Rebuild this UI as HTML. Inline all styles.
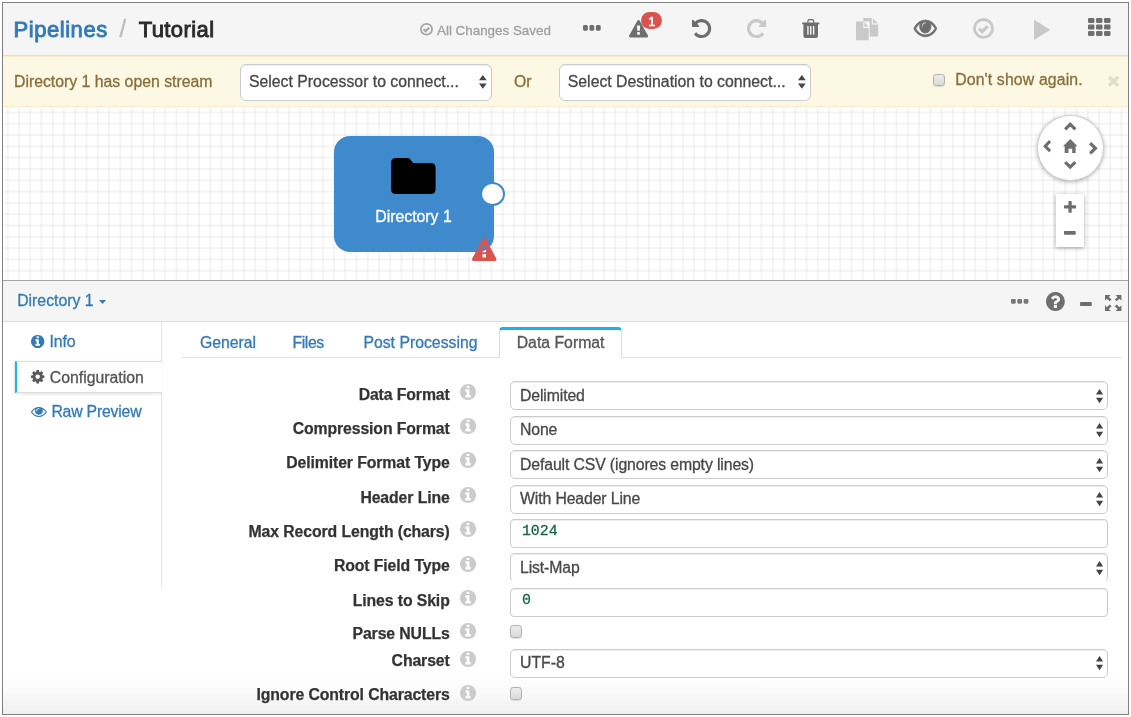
<!DOCTYPE html>
<html lang="en">
<head>
<meta charset="utf-8">
<title>Pipelines / Tutorial</title>
<style>
*{box-sizing:border-box;margin:0;padding:0}
html,body{width:1131px;height:717px;overflow:hidden;background:#fff}
body{font-family:"Liberation Sans",sans-serif;font-size:15.8px;color:#333;position:relative}
.abs{position:absolute}
svg{overflow:visible}
.t{position:absolute;white-space:nowrap;line-height:20px;height:20px;-webkit-text-stroke:.3px}
#frame{position:absolute;left:2px;top:2px;width:1127px;height:713px;border:1px solid #808080;overflow:hidden;background:#fff}
#in{position:absolute;left:-3px;top:-3px;width:1131px;height:717px;will-change:transform}
#hdr{left:3px;top:3px;width:1125px;height:53px;background:#f5f5f5;border-bottom:1px solid #ddd}
#warn{left:3px;top:56px;width:1125px;height:51px;background:#fcf8e3;border-bottom:1px solid #faebcc;border-top:1px solid #faebcc}
#canvas{left:3px;top:107px;width:1125px;height:174px;background-color:#fff;
 background-image:linear-gradient(rgba(0,0,0,.042) 1.6px,transparent 1.6px),linear-gradient(90deg,rgba(0,0,0,.042) 1.6px,transparent 1.6px);
 background-size:11.25px 11.315px;background-position:3.8px 4.45px}
#phdr{left:3px;top:280px;width:1125px;height:42px;background:#f5f5f5;border-top:1px solid #a4a4a4;border-bottom:1px solid #ddd}
.sel{position:absolute;background:#fff;border:1px solid #ccc;box-shadow:inset 0 1px 1px rgba(0,0,0,.075)}
.cb{width:12.3px;height:12.5px;border:1.2px solid #b0b0b0;border-radius:3.2px;background:linear-gradient(#ececec,#dbdbdb);box-shadow:0 .5px 1px rgba(0,0,0,.12)}
</style>
</head>
<body>
<div id="frame"><div id="in">
<div id="hdr" class="abs"></div>
<div class="t " style="left:13.5px;top:19.75px;font-size:22px;color:#337ab7;font-weight:normal;-webkit-text-stroke:0.9px;letter-spacing:.55px">Pipelines</div>
<div class="t " style="left:119.4px;top:19.25px;font-size:23.5px;color:#bdbdbd;font-weight:normal;-webkit-text-stroke:.5px">/</div>
<div class="t " style="left:138.7px;top:19.75px;font-size:22px;color:#2b2b2b;font-weight:normal;-webkit-text-stroke:0.9px;letter-spacing:.4px">Tutorial</div>
<svg class="abs" style="left:420px;top:22.7px;" width="13.00" height="12.50" viewBox="0 0 24 24" preserveAspectRatio="none"><circle cx="12" cy="12" r="10.3" fill="none" stroke="#a6a6a6" stroke-width="3.2"/><path d="M6.8 12.2l3.6 3.6 6.4-6.6" fill="none" stroke="#a6a6a6" stroke-width="4"/></svg>
<div class="t " style="left:437px;top:21.2px;font-size:13.4px;color:#a0a0a0;font-weight:normal;">All Changes Saved</div>
<svg class="abs" style="left:583.4px;top:24.5px;" width="17.70" height="5.70" viewBox="0 704 1408 384" preserveAspectRatio="none"><g fill="#6e6e6e"><path d="M384 800v192q0 40-28 68t-68 28h-192q-40 0-68-28t-28-68v-192q0-40 28-68t68-28h192q40 0 68 28t28 68zM896 800v192q0 40-28 68t-68 28h-192q-40 0-68-28t-28-68v-192q0-40 28-68t68-28h192q40 0 68 28t28 68zM1408 800v192q0 40-28 68t-68 28h-192q-40 0-68-28t-28-68v-192q0-40 28-68t68-28h192q40 0 68 28t28 68z"/></g></svg>
<svg class="abs" style="left:629px;top:19.6px;" width="19.10" height="17.50" viewBox="-1 0 1794 1664" preserveAspectRatio="none"><g fill="#6e6e6e"><path d="M1024 1375v-190q0-14-9.500-23.500t-22.500-9.500h-192q-13 0-22.500 9.500t-9.500 23.500v190q0 14 9.500 23.500t22.500 9.500h192q13 0 22.500-9.500t9.500-23.500zM1022 1001l18-459q0-12-10-19-13-11-24-11h-220q-11 0-24 11-10 7-10 21l17 457q0 10 10 16.500t24 6.500h185q14 0 23.500-6.500t10.500-16.500zM1008 67l768 1408q35 63-2 126-17 29-46.500 46t-63.500 17h-1536q-34 0-63.500-17t-46.500-46q-37-63-2-126l768-1408q17-31 47-49t65-18 65 18 47 49z"/></g></svg>
<div class="abs" style="left:641.1px;top:11.7px;width:21.4px;height:17.8px;border-radius:9px;background:#d9534f;color:#fff;font-size:12px;line-height:20.6px;text-align:center;-webkit-text-stroke:.7px">1</div>
<svg class="abs" style="left:692px;top:18.9px;" width="19.20" height="19.10" viewBox="0 128 1536 1536" preserveAspectRatio="none"><g fill="#6e6e6e"><path d="M1536 896q0 156-61 298t-164 245-245 164-298 61q-172 0-327-72.500t-264-204.500q-7-10-6.500-22.500t8.500-20.500l137-138q10-9 25-9 16 2 23 12 73 95 179 147t225 52q104 0 198.500-40.500t163.500-109.500 109.500-163.500 40.500-198.500-40.500-198.500-109.500-163.500-163.500-109.500-198.500-40.500q-98 0-188 35.500t-160 101.500l137 138q31 30 14 69-17 40-59 40h-448q-26 0-45-19t-19-45v-448q0-42 40-59 39-17 69 14l130 129q107-101 244.500-156.500t284.500-55.500q156 0 298 61t245 164 164 245 61 298z"/></g></svg>
<svg class="abs" style="left:747px;top:18.9px;" width="19.10" height="19.10" viewBox="0 0 1536 1536" preserveAspectRatio="none"><g fill="#c9c9c9"><path d="M1536 128v448q0 26-19 45t-45 19h-448q-42 0-59-40-17-39 14-69l138-138q-148-137-349-137-104 0-198.500 40.500t-163.500 109.500-109.500 163.500-40.500 198.500 40.500 198.500 109.500 163.500 163.500 109.500 198.500 40.500q119 0 225-52t179-147q7-10 23-12 14 0 25 9l137 138q9 8 9.500 20.500t-7.500 22.500q-109 132-264 204.500t-327 72.500q-156 0-298-61t-245-164-164-245-61-298 61-298 164-245 245-164 298-61q147 0 284.500 55.500t244.500 156.500l130-129q29-31 70-14 39 17 39 59z"/></g></svg>
<svg class="abs" style="left:802.1px;top:18.9px;" width="17.40" height="19.10" viewBox="0 0 123 135" preserveAspectRatio="none"><g fill="#6e6e6e"><path fill-rule="evenodd" d="M35 27 L40 7 Q42 0 49 0 H75 Q82 0 84 7 L89 27 H79 L75.5 11 Q75 9 73 9 H51 Q49 9 48.500 11 L45 27 Z"/>
<rect x="0" y="25" width="123" height="13" rx="3.5"/>
<path fill-rule="evenodd" d="M10 36 H113 V121 Q113 135 99 135 H24 Q10 135 10 121 Z M37 52 V108 Q37 111 40 111 H44 Q47 111 47 108 V52 Q47 49 44 49 H40 Q37 49 37 52 Z M57 52 V108 Q57 111 60 111 H64 Q67 111 67 108 V52 Q67 49 64 49 H60 Q57 49 57 52 Z M77 52 V108 Q77 111 80 111 H84 Q87 111 87 108 V52 Q87 49 84 49 H80 Q77 49 77 52 Z"/></g></svg>
<svg class="abs" style="left:855.6px;top:17.9px;" width="22.20" height="22.30" viewBox="0 0 157 157" preserveAspectRatio="none"><g fill="#c9c9c9"><path d="M52 0 H112 V45 H157 V130 H97 V25 H52 Z"/><path d="M120 4 L153 37 H120 Z"/>
<path d="M0 25 H52 V70 H90 V157 H0 Z"/><path d="M59 29 L87 62 H59 Z"/></g></svg>
<svg class="abs" style="left:913.5px;top:20.3px;" width="22.70" height="16.80" viewBox="0 384 1792 1152" preserveAspectRatio="none"><g fill="#6e6e6e" stroke="#6e6e6e" stroke-width="55" stroke-linejoin="round"><path d="M1664 960q-152-236-381-353 61 104 61 225 0 185-131.500 316.500t-316.500 131.500-316.500-131.500-131.500-316.500q0-121 61-225-229 117-381 353 133 205 333.500 326.500t434.500 121.500 434.500-121.500 333.500-326.500zM944 576q0-20-14-34t-34-14q-125 0-214.500 89.500t-89.500 214.500q0 20 14 34t34 14 34-14 14-34q0-86 61-147t147-61q20 0 34-14t14-34zM1792 960q0 34-20 69-140 230-376.500 368.500t-499.500 138.500-499.500-139-376.500-368q-20-35-20-69t20-69q140-229 376.500-368t499.500-139 499.500 139 376.500 368q20 35 20 69z"/></g></svg>
<svg class="abs" style="left:972.5px;top:17.9px;" width="21.00" height="20.80" viewBox="0 0 24 24" preserveAspectRatio="none"><circle cx="12" cy="12" r="10.3" fill="none" stroke="#c9c9c9" stroke-width="3.3"/><path d="M7 12.2l3.5 3.5 6.2-6.4" fill="none" stroke="#c9c9c9" stroke-width="3.8"/></svg>
<svg class="abs" style="left:1033.8px;top:19.7px;" width="15.90" height="19.60" viewBox="0 119.7 1407 1552.7" preserveAspectRatio="none"><g fill="#c9c9c9"><path d="M1384 927l-1328 738q-23 13-39.500 3t-16.500-36v-1472q0-26 16.500-36t39.500 3l1328 738q23 13 23 31t-23 31z"/></g></svg>
<svg class="abs" style="left:1087.9px;top:18.3px;" width="22.50" height="18.00" viewBox="0 128 1792 1408" preserveAspectRatio="none"><g fill="#6e6e6e"><rect x="0" y="128" width="512" height="384" rx="96"/><rect x="640" y="128" width="512" height="384" rx="96"/><rect x="1280" y="128" width="512" height="384" rx="96"/><rect x="0" y="640" width="512" height="384" rx="96"/><rect x="640" y="640" width="512" height="384" rx="96"/><rect x="1280" y="640" width="512" height="384" rx="96"/><rect x="0" y="1152" width="512" height="384" rx="96"/><rect x="640" y="1152" width="512" height="384" rx="96"/><rect x="1280" y="1152" width="512" height="384" rx="96"/></g></svg>
<div id="warn" class="abs"></div>
<div class="t " style="left:14px;top:71.5px;font-size:15.8px;color:#8a6d3b;font-weight:normal;">Directory 1 has open stream</div>
<div class="sel" style="left:240.3px;top:64px;width:251.3px;height:36.5px;border-radius:6px"></div>
<div class="t " style="left:249.0px;top:71.75px;font-size:15.8px;color:#484848;font-weight:normal;">Select Processor to connect...</div>
<svg class="abs" style="left:479.15px;top:75.35000000000001px;" width="7.70" height="13.70" viewBox="0 0 7.7 13.7" preserveAspectRatio="none"><path d="M3.85 0L7.7 5.3H0Z M0 8.4H7.7L3.85 13.7Z" fill="#444"/></svg>
<div class="t " style="left:514px;top:71.5px;font-size:15.8px;color:#8a6d3b;font-weight:normal;">Or</div>
<div class="sel" style="left:559.2px;top:64px;width:251.7px;height:36.5px;border-radius:6px"></div>
<div class="t " style="left:567.8px;top:71.75px;font-size:15.8px;color:#484848;font-weight:normal;">Select Destination to connect...</div>
<svg class="abs" style="left:797.85px;top:75.35000000000001px;" width="7.70" height="13.70" viewBox="0 0 7.7 13.7" preserveAspectRatio="none"><path d="M3.85 0L7.7 5.3H0Z M0 8.4H7.7L3.85 13.7Z" fill="#444"/></svg>
<div class="cb abs" style="left:932.7px;top:73.5px"></div>
<div class="t " style="left:955.2px;top:69.75px;font-size:15.8px;color:#8a6d3b;font-weight:normal;letter-spacing:.15px">Don't show again.</div>
<svg class="abs" style="left:1107.9px;top:76px;" width="11.10" height="10.60" viewBox="110 366 1188 1188" preserveAspectRatio="none"><g fill="#e3dec6"><path d="M1298 1322q0 40-28 68l-136 136q-28 28-68 28t-68-28l-294-294-294 294q-28 28-68 28t-68-28l-136-136q-28-28-28-68t28-68l294-294-294-294q-28-28-28-68t28-68l136-136q28-28 68-28t68 28l294 294 294-294q28-28 68-28t68 28l136 136q28 28 28 68t-28 68l-294 294 294 294q28 28 28 68z"/></g></svg>
<div id="canvas" class="abs"></div>
<div class="abs" style="left:333.5px;top:136px;width:160px;height:115.5px;border-radius:16px;background:#3f8acd"></div>
<svg class="abs" style="left:391.2px;top:157.8px;" width="44.60" height="36.10" viewBox="0 0 640 517" preserveAspectRatio="none"><path fill="#000" d="M68 0H240Q258 0 270 12L318 70H572Q640 70 640 138V449Q640 517 572 517H68Q0 517 0 449V68Q0 0 68 0Z"/></svg>
<div class="t" style="left:333.5px;width:160px;text-align:center;top:206.83px;font-size:15.8px;color:#fff">Directory 1</div>
<div class="abs" style="left:479.9px;top:181.9px;width:24.7px;height:24.2px;border-radius:50%;background:#fff;border:2.7px solid #3f8acd"></div>
<svg class="abs" style="left:472px;top:237.6px;" width="24.50" height="23.10" viewBox="-1 0 1794 1664" preserveAspectRatio="none"><g fill="#d9534f"><path d="M1024 1375v-190q0-14-9.500-23.500t-22.500-9.500h-192q-13 0-22.500 9.500t-9.500 23.500v190q0 14 9.500 23.500t22.500 9.500h192q13 0 22.500-9.500t9.500-23.500zM1022 1001l18-459q0-12-10-19-13-11-24-11h-220q-11 0-24 11-10 7-10 21l17 457q0 10 10 16.500t24 6.500h185q14 0 23.500-6.500t10.500-16.500zM1008 67l768 1408q35 63-2 126-17 29-46.500 46t-63.500 17h-1536q-34 0-63.500-17t-46.500-46q-37-63-2-126l768-1408q17-31 47-49t65-18 65 18 47 49z"/></g></svg>
<div class="abs" style="left:1037px;top:115.2px;width:66.6px;height:66px;border-radius:50%;background:#fff;border:1px solid #cfcfcf;box-shadow:0 1px 4px rgba(0,0,0,.3)"></div>
<svg class="abs" style="left:1063.7px;top:122.2px;" width="12.50" height="8.50" viewBox="0 0 150 102" preserveAspectRatio="none"><polygon points="0,75 75,0 150,75 123,102 75,54 27,102" fill="#6e6e6e"/></svg>
<svg class="abs" style="left:1063.7px;top:160.7px;" width="12.50" height="8.20" viewBox="0 0 150 102" preserveAspectRatio="none"><polygon points="0,27 75,102 150,27 123,0 75,48 27,0" fill="#6e6e6e"/></svg>
<svg class="abs" style="left:1042.9px;top:139.6px;" width="8.20" height="12.30" viewBox="0 0 102 150" preserveAspectRatio="none"><polygon points="75,0 0,75 75,150 102,123 54,75 102,27" fill="#6e6e6e"/></svg>
<svg class="abs" style="left:1088.5px;top:142px;" width="8.70" height="12.60" viewBox="0 0 102 150" preserveAspectRatio="none"><polygon points="27,0 102,75 27,150 0,123 48,75 0,27" fill="#6e6e6e"/></svg>
<svg class="abs" style="left:1062.6px;top:138.9px;" width="14.50" height="14.10" viewBox="0 0 173 168" preserveAspectRatio="none"><path fill="#6e6e6e" d="M87 0L173 85H150V168H110V115H65V168H20V85H0Z"/></svg>
<div class="abs" style="left:1055.5px;top:193.6px;width:28.5px;height:53.4px;background:#fff;box-shadow:0 1px 4px rgba(0,0,0,.35)"></div>
<svg class="abs" style="left:1063.5px;top:201.4px;" width="12.10" height="11.70" viewBox="0 192 1408 1408" preserveAspectRatio="none"><g fill="#6e6e6e"><path d="M1408 800v192q0 40-28 68t-68 28h-416v416q0 40-28 68t-68 28h-192q-40 0-68-28t-28-68v-416h-416q-40 0-68-28t-28-68v-192q0-40 28-68t68-28h416v-416q0-40 28-68t68-28h192q40 0 68 28t28 68v416h416q40 0 68 28t28 68z"/></g></svg>
<svg class="abs" style="left:1063.7px;top:231.3px;" width="11.70" height="3.80" viewBox="0 640 1408 384" preserveAspectRatio="none"><g fill="#6e6e6e"><path d="M1408 736v192q0 40-28 68t-68 28h-1216q-40 0-68-28t-28-68v-192q0-40 28-68t68-28h1216q40 0 68 28t28 68z"/></g></svg>
<div id="phdr" class="abs"></div>
<div class="t " style="left:17.2px;top:290.75px;font-size:15.8px;color:#337ab7;font-weight:normal;">Directory 1</div>
<svg class="abs" style="left:98.8px;top:299.6px;" width="7.00" height="3.90" viewBox="0 0 8 4.5" preserveAspectRatio="none"><path d="M0 0H8L4 4.5Z" fill="#337ab7"/></svg>
<svg class="abs" style="left:1011.3px;top:298.8px;" width="17.40" height="4.70" viewBox="0 704 1408 384" preserveAspectRatio="none"><g fill="#777"><path d="M384 800v192q0 40-28 68t-68 28h-192q-40 0-68-28t-28-68v-192q0-40 28-68t68-28h192q40 0 68 28t28 68zM896 800v192q0 40-28 68t-68 28h-192q-40 0-68-28t-28-68v-192q0-40 28-68t68-28h192q40 0 68 28t28 68zM1408 800v192q0 40-28 68t-68 28h-192q-40 0-68-28t-28-68v-192q0-40 28-68t68-28h192q40 0 68 28t28 68z"/></g></svg>
<svg class="abs" style="left:1045.7px;top:292.2px;" width="18.80" height="19.10" viewBox="0 128 1536 1536" preserveAspectRatio="none"><g fill="#6e6e6e"><path d="M896 1376v-192q0-14-9-23t-23-9h-192q-14 0-23 9t-9 23v192q0 14 9 23t23 9h192q14 0 23-9t9-23zM1152 704q0-88-55.500-163t-138.500-116-170-41q-243 0-371 213-15 24 8 42l132 100q7 6 19 6 16 0 25-12 53-68 86-92 34-24 86-24 48 0 85.500 26t37.500 59q0 38-20 61t-68 45q-63 28-115.500 86.500t-52.500 125.500v36q0 14 9 23t23 9h192q14 0 23-9t9-23q0-19 21.500-49.500t54.500-49.500q32-18 49-28.500t46-35 44.500-48 28-60.500 12.500-81zM1536 896q0 209-103 385.500t-279.500 279.500-385.500 103-385.500-103-279.500-279.500-103-385.500 103-385.500 279.500-279.500 385.500-103 385.500 103 279.500 279.500 103 385.500z"/></g></svg>
<svg class="abs" style="left:1079.5px;top:301.7px;" width="11.80" height="4.00" viewBox="0 640 1408 384" preserveAspectRatio="none"><g fill="#6e6e6e"><path d="M1408 736v192q0 40-28 68t-68 28h-1216q-40 0-68-28t-28-68v-192q0-40 28-68t68-28h1216q40 0 68 28t28 68z"/></g></svg>
<svg class="abs" style="left:1104.6px;top:295.1px;" width="16.40" height="15.90" viewBox="0 0 16 16" preserveAspectRatio="none"><g fill="#6e6e6e"><path d="M0 0H5.6L3.7 1.9L6.4 4.600L4.600 6.400L1.900 3.700L0 5.600Z"/><path d="M16 0V5.600L14.100 3.700L11.400 6.400L9.600 4.600L12.300 1.900L10.400 0Z"/><path d="M0 16V10.400L1.900 12.300L4.600 9.600L6.400 11.400L3.700 14.100L5.600 16Z"/><path d="M16 16H10.400L12.300 14.100L9.600 11.400L11.400 9.600L14.100 12.300L16 10.400Z"/></g></svg>
<div class="abs" style="left:161px;top:322px;width:1px;height:40px;background:#e4e4e4"></div>
<div class="abs" style="left:161px;top:392px;width:1px;height:196px;background:#e4e4e4"></div>
<div class="abs" style="left:15.4px;top:361px;width:146.6px;height:32px;border-top:1px solid #ddd;border-bottom:1px solid #ddd;border-left:2.2px solid #1cb5ea;background:#fff;box-shadow:-1px 1px 3px rgba(0,0,0,.12)"></div>
<svg class="abs" style="left:31.4px;top:335.1px;" width="13.40" height="13.00" viewBox="0 128 1536 1536" preserveAspectRatio="none"><g fill="#337ab7"><path d="M1024 1376v-160q0-14-9-23t-23-9h-96v-512q0-14-9-23t-23-9h-320q-14 0-23 9t-9 23v160q0 14 9 23t23 9h96v320h-96q-14 0-23 9t-9 23v160q0 14 9 23t23 9h448q14 0 23-9t9-23zM896 480v-160q0-14-9-23t-23-9h-192q-14 0-23 9t-9 23v160q0 14 9 23t23 9h192q14 0 23-9t9-23zM1536 896q0 209-103 385.500t-279.500 279.500-385.500 103-385.500-103-279.500-279.500-103-385.500 103-385.500 279.500-279.500 385.500-103 385.500 103 279.500 279.500 103 385.500z"/></g></svg>
<div class="t " style="left:49.6px;top:331.75px;font-size:15.8px;color:#337ab7;font-weight:normal;letter-spacing:-.15px">Info</div>
<svg class="abs" style="left:31.4px;top:370.2px;" width="13.40" height="13.40" viewBox="0 128 1536 1536" preserveAspectRatio="none"><g fill="#5a5a5a"><path d="M1024 896q0-106-75-181t-181-75-181 75-75 181 75 181 181 75 181-75 75-181zM1536 787v222q0 12-8 23t-20 13l-185 28q-19 54-39 91 35 50 107 138 10 12 10 25t-9 23q-27 37-99 108t-94 71q-12 0-26-9l-138-108q-44 23-91 38-16 136-29 186-7 28-36 28h-222q-14 0-24.500-8.500t-11.500-21.500l-28-184q-49-16-90-37l-141 107q-10 9-25 9-14 0-25-11-126-114-165-168-7-10-7-23 0-12 8-23 15-21 51-66.500t54-70.500q-27-50-41-99l-183-27q-13-2-21-12.500t-8-23.500v-222q0-12 8-23t19-13l186-28q14-46 39-92-40-57-107-138-10-12-10-24 0-10 9-23 26-36 98.500-107.500t94.500-71.500q13 0 26 10l138 107q44-23 91-38 16-136 29-186 7-28 36-28h222q14 0 24.500 8.500t11.500 21.500l28 184q49 16 90 37l142-107q9-9 24-9 13 0 25 10 129 119 165 170 7 8 7 22 0 12-8 23-15 21-51 66.500t-54 70.500q26 50 41 98l183 28q13 2 21 12.500t8 23.500z"/></g></svg>
<div class="t " style="left:49.8px;top:367.75px;font-size:15.8px;color:#555;font-weight:normal;">Configuration</div>
<svg class="abs" style="left:31.4px;top:407px;" width="15.80" height="10.00" viewBox="0 384 1792 1152" preserveAspectRatio="none"><g fill="#337ab7"><path d="M1664 960q-152-236-381-353 61 104 61 225 0 185-131.500 316.500t-316.500 131.500-316.500-131.500-131.500-316.500q0-121 61-225-229 117-381 353 133 205 333.500 326.500t434.500 121.500 434.500-121.500 333.500-326.500zM944 576q0-20-14-34t-34-14q-125 0-214.500 89.500t-89.500 214.500q0 20 14 34t34 14 34-14 14-34q0-86 61-147t147-61q20 0 34-14t14-34zM1792 960q0 34-20 69-140 230-376.500 368.500t-499.500 138.500-499.500-139-376.500-368q-20-35-20-69t20-69q140-229 376.500-368t499.500-139 499.500 139 376.500 368q20 35 20 69z"/></g></svg>
<div class="t " style="left:51.4px;top:401.75px;font-size:15.8px;color:#337ab7;font-weight:normal;letter-spacing:-.2px">Raw Preview</div>
<div class="abs" style="left:182px;top:357px;width:939px;height:1px;background:#ddd"></div>
<div class="t " style="left:199.9px;top:332.75px;font-size:15.8px;color:#337ab7;font-weight:normal;">General</div>
<div class="t " style="left:292.6px;top:332.75px;font-size:15.8px;color:#337ab7;font-weight:normal;letter-spacing:-.45px">Files</div>
<div class="t " style="left:363.4px;top:332.75px;font-size:15.8px;color:#337ab7;font-weight:normal;">Post Processing</div>
<div class="abs" style="left:499.4px;top:326.8px;width:122.6px;height:31.3px;border:1px solid #ddd;border-bottom:0;border-top:3px solid #1cb2e9;border-radius:4px 4px 0 0;background:#fff"></div>
<div class="t " style="left:516.7px;top:332.75px;font-size:15.8px;color:#555;font-weight:normal;">Data Format</div>
<div class="abs" style="left:3px;top:672px;width:1125px;height:42px;background:linear-gradient(rgba(239,239,239,0),rgba(239,239,239,.3) 50%,rgba(239,239,239,1))"></div>
<div class="t " style="right:681.3px;top:384.75px;font-size:15.8px;color:#333;font-weight:bold;-webkit-text-stroke:.25px;letter-spacing:-.1px">Data Format</div>
<svg class="abs" style="left:459.8px;top:383.7px;" width="16.10" height="16.10" viewBox="0 128 1536 1536" preserveAspectRatio="none"><g fill="#cbcbcb"><path d="M1024 1376v-160q0-14-9-23t-23-9h-96v-512q0-14-9-23t-23-9h-320q-14 0-23 9t-9 23v160q0 14 9 23t23 9h96v320h-96q-14 0-23 9t-9 23v160q0 14 9 23t23 9h448q14 0 23-9t9-23zM896 480v-160q0-14-9-23t-23-9h-192q-14 0-23 9t-9 23v160q0 14 9 23t23 9h192q14 0 23-9t9-23zM1536 896q0 209-103 385.500t-279.500 279.500-385.500 103-385.500-103-279.500-279.500-103-385.500 103-385.500 279.500-279.500 385.500-103 385.500 103 279.500 279.500 103 385.500z"/></g></svg>
<div class="sel" style="left:510.3px;top:381.4px;width:598.2px;height:29px;border-radius:5px"></div>
<div class="t " style="left:520.0px;top:385.75px;font-size:15.8px;color:#484848;font-weight:normal;letter-spacing:-.12px">Delimited</div>
<svg class="abs" style="left:1095.9px;top:388.79999999999995px;" width="7.10" height="14.20" viewBox="0 0 7.1 14.2" preserveAspectRatio="none"><path d="M3.55 0L7.1 5.4H0Z M0 8.8H7.1L3.55 14.2Z" fill="#444"/></svg>
<div class="t " style="right:681.3px;top:418.75px;font-size:15.8px;color:#333;font-weight:bold;-webkit-text-stroke:.25px;letter-spacing:-.1px">Compression Format</div>
<svg class="abs" style="left:459.8px;top:418.07px;" width="16.10" height="16.10" viewBox="0 128 1536 1536" preserveAspectRatio="none"><g fill="#cbcbcb"><path d="M1024 1376v-160q0-14-9-23t-23-9h-96v-512q0-14-9-23t-23-9h-320q-14 0-23 9t-9 23v160q0 14 9 23t23 9h96v320h-96q-14 0-23 9t-9 23v160q0 14 9 23t23 9h448q14 0 23-9t9-23zM896 480v-160q0-14-9-23t-23-9h-192q-14 0-23 9t-9 23v160q0 14 9 23t23 9h192q14 0 23-9t9-23zM1536 896q0 209-103 385.500t-279.500 279.500-385.500 103-385.500-103-279.500-279.500-103-385.500 103-385.500 279.500-279.500 385.500-103 385.500 103 279.500 279.500 103 385.500z"/></g></svg>
<div class="sel" style="left:510.3px;top:415.8px;width:598.2px;height:29px;border-radius:5px"></div>
<div class="t " style="left:520.0px;top:419.75px;font-size:15.8px;color:#484848;font-weight:normal;letter-spacing:-.12px">None</div>
<svg class="abs" style="left:1095.9px;top:423.16999999999996px;" width="7.10" height="14.20" viewBox="0 0 7.1 14.2" preserveAspectRatio="none"><path d="M3.55 0L7.1 5.4H0Z M0 8.8H7.1L3.55 14.2Z" fill="#444"/></svg>
<div class="t " style="right:681.3px;top:452.75px;font-size:15.8px;color:#333;font-weight:bold;-webkit-text-stroke:.25px;letter-spacing:-.1px">Delimiter Format Type</div>
<svg class="abs" style="left:459.8px;top:452.44px;" width="16.10" height="16.10" viewBox="0 128 1536 1536" preserveAspectRatio="none"><g fill="#cbcbcb"><path d="M1024 1376v-160q0-14-9-23t-23-9h-96v-512q0-14-9-23t-23-9h-320q-14 0-23 9t-9 23v160q0 14 9 23t23 9h96v320h-96q-14 0-23 9t-9 23v160q0 14 9 23t23 9h448q14 0 23-9t9-23zM896 480v-160q0-14-9-23t-23-9h-192q-14 0-23 9t-9 23v160q0 14 9 23t23 9h192q14 0 23-9t9-23zM1536 896q0 209-103 385.500t-279.500 279.500-385.500 103-385.500-103-279.500-279.500-103-385.500 103-385.500 279.500-279.500 385.500-103 385.500 103 279.500 279.500 103 385.500z"/></g></svg>
<div class="sel" style="left:510.3px;top:450.1px;width:598.2px;height:29px;border-radius:5px"></div>
<div class="t " style="left:520.0px;top:454.75px;font-size:15.8px;color:#484848;font-weight:normal;letter-spacing:-.12px">Default CSV (ignores empty lines)</div>
<svg class="abs" style="left:1095.9px;top:457.53999999999996px;" width="7.10" height="14.20" viewBox="0 0 7.1 14.2" preserveAspectRatio="none"><path d="M3.55 0L7.1 5.4H0Z M0 8.8H7.1L3.55 14.2Z" fill="#444"/></svg>
<div class="t " style="right:681.3px;top:487.75px;font-size:15.8px;color:#333;font-weight:bold;-webkit-text-stroke:.25px;letter-spacing:-.1px">Header Line</div>
<svg class="abs" style="left:459.8px;top:486.81px;" width="16.10" height="16.10" viewBox="0 128 1536 1536" preserveAspectRatio="none"><g fill="#cbcbcb"><path d="M1024 1376v-160q0-14-9-23t-23-9h-96v-512q0-14-9-23t-23-9h-320q-14 0-23 9t-9 23v160q0 14 9 23t23 9h96v320h-96q-14 0-23 9t-9 23v160q0 14 9 23t23 9h448q14 0 23-9t9-23zM896 480v-160q0-14-9-23t-23-9h-192q-14 0-23 9t-9 23v160q0 14 9 23t23 9h192q14 0 23-9t9-23zM1536 896q0 209-103 385.500t-279.500 279.500-385.500 103-385.500-103-279.500-279.500-103-385.500 103-385.500 279.500-279.500 385.500-103 385.500 103 279.500 279.500 103 385.500z"/></g></svg>
<div class="sel" style="left:510.3px;top:484.5px;width:598.2px;height:29px;border-radius:5px"></div>
<div class="t " style="left:520.0px;top:488.75px;font-size:15.8px;color:#484848;font-weight:normal;letter-spacing:-.12px">With Header Line</div>
<svg class="abs" style="left:1095.9px;top:491.90999999999997px;" width="7.10" height="14.20" viewBox="0 0 7.1 14.2" preserveAspectRatio="none"><path d="M3.55 0L7.1 5.4H0Z M0 8.8H7.1L3.55 14.2Z" fill="#444"/></svg>
<div class="t " style="right:681.3px;top:521.75px;font-size:15.8px;color:#333;font-weight:bold;-webkit-text-stroke:.25px;letter-spacing:-.1px">Max Record Length (chars)</div>
<svg class="abs" style="left:459.8px;top:521.18px;" width="16.10" height="16.10" viewBox="0 128 1536 1536" preserveAspectRatio="none"><g fill="#cbcbcb"><path d="M1024 1376v-160q0-14-9-23t-23-9h-96v-512q0-14-9-23t-23-9h-320q-14 0-23 9t-9 23v160q0 14 9 23t23 9h96v320h-96q-14 0-23 9t-9 23v160q0 14 9 23t23 9h448q14 0 23-9t9-23zM896 480v-160q0-14-9-23t-23-9h-192q-14 0-23 9t-9 23v160q0 14 9 23t23 9h192q14 0 23-9t9-23zM1536 896q0 209-103 385.500t-279.500 279.500-385.500 103-385.500-103-279.500-279.500-103-385.500 103-385.500 279.500-279.500 385.500-103 385.500 103 279.500 279.500 103 385.500z"/></g></svg>
<div class="sel" style="left:510.3px;top:518.9px;width:598.2px;height:29.2px;border-radius:4px"></div>
<div class="t" style="left:521.9px;top:521.43px;font-family:'Liberation Mono',monospace;font-size:14.9px;color:#116644">1024</div>
<div class="t " style="right:681.3px;top:555.75px;font-size:15.8px;color:#333;font-weight:bold;-webkit-text-stroke:.25px;letter-spacing:-.1px">Root Field Type</div>
<svg class="abs" style="left:459.8px;top:555.55px;" width="16.10" height="16.10" viewBox="0 128 1536 1536" preserveAspectRatio="none"><g fill="#cbcbcb"><path d="M1024 1376v-160q0-14-9-23t-23-9h-96v-512q0-14-9-23t-23-9h-320q-14 0-23 9t-9 23v160q0 14 9 23t23 9h96v320h-96q-14 0-23 9t-9 23v160q0 14 9 23t23 9h448q14 0 23-9t9-23zM896 480v-160q0-14-9-23t-23-9h-192q-14 0-23 9t-9 23v160q0 14 9 23t23 9h192q14 0 23-9t9-23zM1536 896q0 209-103 385.500t-279.500 279.500-385.500 103-385.500-103-279.500-279.500-103-385.500 103-385.500 279.500-279.500 385.500-103 385.500 103 279.500 279.500 103 385.500z"/></g></svg>
<div class="sel" style="left:510.3px;top:553.2px;width:598.2px;height:29px;border-radius:5px;border-bottom-color:transparent"></div>
<div class="t " style="left:520.0px;top:557.75px;font-size:15.8px;color:#484848;font-weight:normal;letter-spacing:-.12px">List-Map</div>
<svg class="abs" style="left:1095.9px;top:560.65px;" width="7.10" height="14.20" viewBox="0 0 7.1 14.2" preserveAspectRatio="none"><path d="M3.55 0L7.1 5.4H0Z M0 8.8H7.1L3.55 14.2Z" fill="#444"/></svg>
<div class="t " style="right:681.3px;top:590.75px;font-size:15.8px;color:#333;font-weight:bold;-webkit-text-stroke:.25px;letter-spacing:-.1px">Lines to Skip</div>
<svg class="abs" style="left:459.8px;top:589.9199999999998px;" width="16.10" height="16.10" viewBox="0 128 1536 1536" preserveAspectRatio="none"><g fill="#cbcbcb"><path d="M1024 1376v-160q0-14-9-23t-23-9h-96v-512q0-14-9-23t-23-9h-320q-14 0-23 9t-9 23v160q0 14 9 23t23 9h96v320h-96q-14 0-23 9t-9 23v160q0 14 9 23t23 9h448q14 0 23-9t9-23zM896 480v-160q0-14-9-23t-23-9h-192q-14 0-23 9t-9 23v160q0 14 9 23t23 9h192q14 0 23-9t9-23zM1536 896q0 209-103 385.500t-279.500 279.500-385.500 103-385.500-103-279.500-279.500-103-385.500 103-385.500 279.500-279.500 385.500-103 385.500 103 279.500 279.500 103 385.500z"/></g></svg>
<div class="sel" style="left:510.3px;top:587.6px;width:598.2px;height:29.2px;border-radius:4px"></div>
<div class="t" style="left:521.9px;top:590.17px;font-family:'Liberation Mono',monospace;font-size:14.9px;color:#116644">0</div>
<div class="t " style="right:681.3px;top:623.75px;font-size:15.8px;color:#333;font-weight:bold;-webkit-text-stroke:.25px;letter-spacing:-.1px">Parse NULLs</div>
<svg class="abs" style="left:459.8px;top:623.1500000000001px;" width="16.10" height="16.10" viewBox="0 128 1536 1536" preserveAspectRatio="none"><g fill="#cbcbcb"><path d="M1024 1376v-160q0-14-9-23t-23-9h-96v-512q0-14-9-23t-23-9h-320q-14 0-23 9t-9 23v160q0 14 9 23t23 9h96v320h-96q-14 0-23 9t-9 23v160q0 14 9 23t23 9h448q14 0 23-9t9-23zM896 480v-160q0-14-9-23t-23-9h-192q-14 0-23 9t-9 23v160q0 14 9 23t23 9h192q14 0 23-9t9-23zM1536 896q0 209-103 385.500t-279.500 279.500-385.500 103-385.500-103-279.500-279.500-103-385.500 103-385.500 279.500-279.500 385.500-103 385.500 103 279.500 279.500 103 385.500z"/></g></svg>
<div class="cb abs" style="left:510px;top:625.4px"></div>
<div class="t " style="right:681.3px;top:650.75px;font-size:15.8px;color:#333;font-weight:bold;-webkit-text-stroke:.25px;letter-spacing:-.1px">Charset</div>
<svg class="abs" style="left:459.8px;top:650.5500000000001px;" width="16.10" height="16.10" viewBox="0 128 1536 1536" preserveAspectRatio="none"><g fill="#cbcbcb"><path d="M1024 1376v-160q0-14-9-23t-23-9h-96v-512q0-14-9-23t-23-9h-320q-14 0-23 9t-9 23v160q0 14 9 23t23 9h96v320h-96q-14 0-23 9t-9 23v160q0 14 9 23t23 9h448q14 0 23-9t9-23zM896 480v-160q0-14-9-23t-23-9h-192q-14 0-23 9t-9 23v160q0 14 9 23t23 9h192q14 0 23-9t9-23zM1536 896q0 209-103 385.500t-279.500 279.500-385.500 103-385.500-103-279.500-279.500-103-385.500 103-385.500 279.500-279.500 385.500-103 385.500 103 279.500 279.500 103 385.500z"/></g></svg>
<div class="sel" style="left:510.3px;top:648.8px;width:598.2px;height:28.8px;border-radius:5px"></div>
<div class="t " style="left:520.0px;top:652.75px;font-size:15.8px;color:#484848;font-weight:normal;">UTF-8</div>
<svg class="abs" style="left:1095.9px;top:656.1px;" width="7.10" height="14.20" viewBox="0 0 7.1 14.2" preserveAspectRatio="none"><path d="M3.55 0L7.1 5.4H0Z M0 8.8H7.1L3.55 14.2Z" fill="#444"/></svg>
<div class="t " style="right:681.3px;top:684.75px;font-size:15.8px;color:#333;font-weight:bold;-webkit-text-stroke:.25px;letter-spacing:-.1px">Ignore Control Characters</div>
<svg class="abs" style="left:459.8px;top:685.35px;" width="16.10" height="16.10" viewBox="0 128 1536 1536" preserveAspectRatio="none"><g fill="#cbcbcb"><path d="M1024 1376v-160q0-14-9-23t-23-9h-96v-512q0-14-9-23t-23-9h-320q-14 0-23 9t-9 23v160q0 14 9 23t23 9h96v320h-96q-14 0-23 9t-9 23v160q0 14 9 23t23 9h448q14 0 23-9t9-23zM896 480v-160q0-14-9-23t-23-9h-192q-14 0-23 9t-9 23v160q0 14 9 23t23 9h192q14 0 23-9t9-23zM1536 896q0 209-103 385.500t-279.500 279.500-385.500 103-385.500-103-279.500-279.500-103-385.500 103-385.500 279.500-279.500 385.500-103 385.500 103 279.500 279.500 103 385.500z"/></g></svg>
<div class="cb abs" style="left:510px;top:687px"></div>
</div></div>
</body>
</html>
